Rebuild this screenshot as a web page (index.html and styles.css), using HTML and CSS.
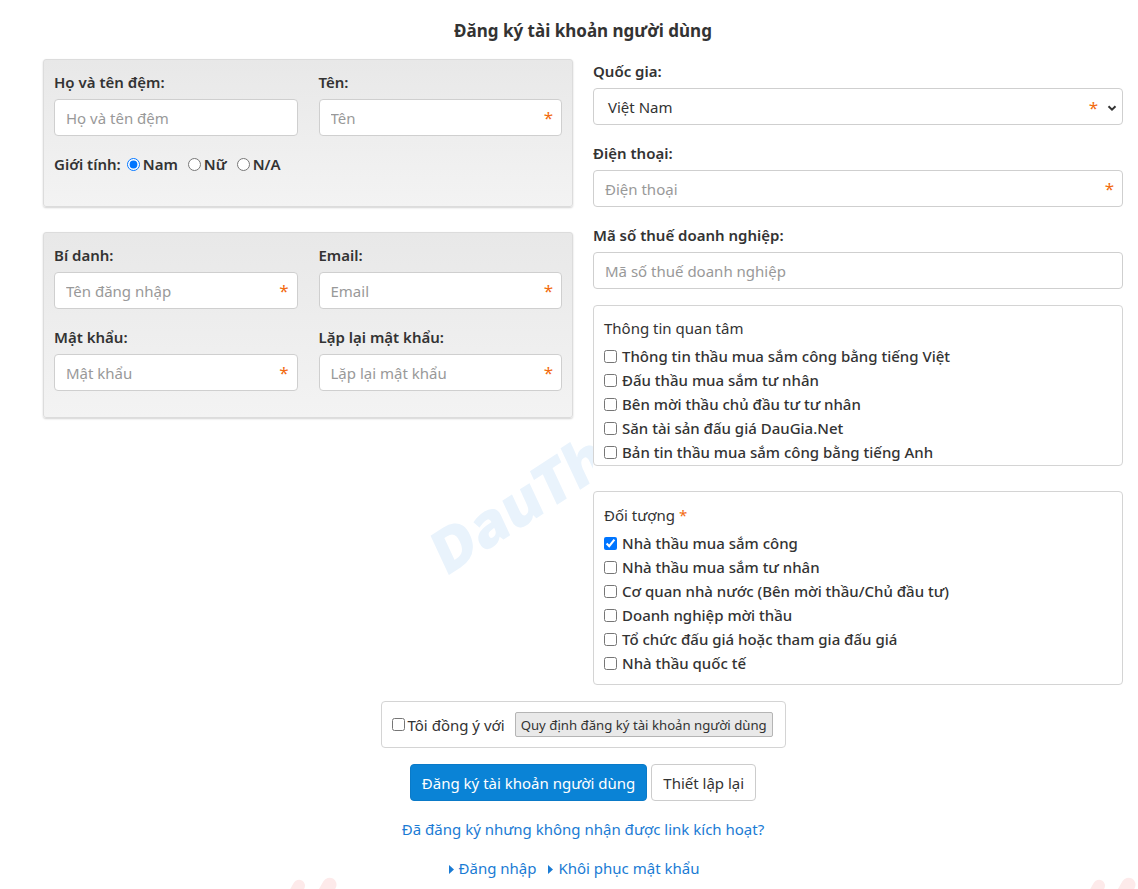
FILE: index.html
```html
<!DOCTYPE html>
<html lang="vi">
<head>
<meta charset="utf-8">
<title>Đăng ký tài khoản người dùng</title>
<link rel="stylesheet" href="styles.css">
</head>
<body>
<div class="viewport">
  <div class="wm-clip" aria-hidden="true"><div class="wm-blue">DauThau</div></div>
  <span class="blob blob-1" aria-hidden="true"></span>
  <span class="blob blob-2" aria-hidden="true"></span>
  <span class="blob blob-3" aria-hidden="true"></span>
  <span class="blob blob-4" aria-hidden="true"></span>
  <div class="page">
    <h1 class="title">Đăng ký tài khoản người dùng</h1>
    <div class="cols">
      <div class="col">
        <div class="panel panel-name">
          <div class="grid2">
            <div class="group">
              <label class="lbl">Họ và tên đệm:</label>
              <div class="field"><input class="input" placeholder="Họ và tên đệm"></div>
            </div>
            <div class="group">
              <label class="lbl">Tên:</label>
              <div class="field"><input class="input" placeholder="Tên"><span class="req">*</span></div>
            </div>
          </div>
          <div class="gender">
            <span class="lbl">Giới tính:</span>
            <label class="opt"><input type="radio" name="g" checked>Nam</label>
            <label class="opt"><input type="radio" name="g">Nữ</label>
            <label class="opt"><input type="radio" name="g">N/A</label>
          </div>
        </div>
        <div class="panel panel-account">
          <div class="grid2">
            <div class="group">
              <label class="lbl">Bí danh:</label>
              <div class="field"><input class="input" placeholder="Tên đăng nhập"><span class="req">*</span></div>
            </div>
            <div class="group">
              <label class="lbl">Email:</label>
              <div class="field"><input class="input" placeholder="Email"><span class="req">*</span></div>
            </div>
            <div class="group">
              <label class="lbl">Mật khẩu:</label>
              <div class="field"><input class="input" placeholder="Mật khẩu"><span class="req">*</span></div>
            </div>
            <div class="group">
              <label class="lbl">Lặp lại mật khẩu:</label>
              <div class="field"><input class="input" placeholder="Lặp lại mật khẩu"><span class="req">*</span></div>
            </div>
          </div>
        </div>
      </div>
      <div class="col col-right">
        <div class="group rgroup">
          <label class="lbl">Quốc gia:</label>
          <div class="field">
            <div class="select">Việt Nam
              <span class="req req-select">*</span>
              <svg class="chev" width="10" height="8" viewBox="0 0 10 8"><path d="M1.5 2.2 L5 5.6 L8.5 2.2" fill="none" stroke="#333" stroke-width="2"/></svg>
            </div>
          </div>
        </div>
        <div class="group rgroup">
          <label class="lbl">Điện thoại:</label>
          <div class="field"><input class="input" placeholder="Điện thoại"><span class="req">*</span></div>
        </div>
        <div class="group rgroup rgroup-last">
          <label class="lbl">Mã số thuế doanh nghiệp:</label>
          <div class="field"><input class="input" placeholder="Mã số thuế doanh nghiệp"></div>
        </div>
        <div class="box box-interest">
          <div class="legend">Thông tin quan tâm</div>
          <label class="check"><input type="checkbox">Thông tin thầu mua sắm công bằng tiếng Việt</label>
          <label class="check"><input type="checkbox">Đấu thầu mua sắm tư nhân</label>
          <label class="check"><input type="checkbox">Bên mời thầu chủ đầu tư tư nhân</label>
          <label class="check"><input type="checkbox">Săn tài sản đấu giá DauGia.Net</label>
          <label class="check"><input type="checkbox">Bản tin thầu mua sắm công bằng tiếng Anh</label>
        </div>
        <div class="box box-target">
          <div class="legend">Đối tượng <span class="req-inline">*</span></div>
          <label class="check"><input type="checkbox" checked>Nhà thầu mua sắm công</label>
          <label class="check"><input type="checkbox">Nhà thầu mua sắm tư nhân</label>
          <label class="check"><input type="checkbox">Cơ quan nhà nước (Bên mời thầu/Chủ đầu tư)</label>
          <label class="check"><input type="checkbox">Doanh nghiệp mời thầu</label>
          <label class="check"><input type="checkbox">Tổ chức đấu giá hoặc tham gia đấu giá</label>
          <label class="check"><input type="checkbox">Nhà thầu quốc tế</label>
        </div>
      </div>
    </div>
    <div class="agree-row">
      <div class="agree">
        <label class="agree-label"><input type="checkbox">Tôi đồng ý với</label>
        <button class="rule-btn" type="button">Quy định đăng ký tài khoản người dùng</button>
      </div>
    </div>
    <div class="actions">
      <button class="btn btn-primary" type="button">Đăng ký tài khoản người dùng</button>
      <button class="btn btn-default" type="button">Thiết lập lại</button>
    </div>
    <p class="resend"><a href="#">Đã đăng ký nhưng không nhận được link kích hoạt?</a></p>
    <p class="links">
      <a href="#"><svg class="tri" width="5" height="9" viewBox="0 0 5 9"><path d="M0 0 L5 4.5 L0 9 Z" fill="#1a7bd4"/></svg>Đăng nhập</a>
      <a href="#"><svg class="tri" width="5" height="9" viewBox="0 0 5 9"><path d="M0 0 L5 4.5 L0 9 Z" fill="#1a7bd4"/></svg>Khôi phục mật khẩu</a>
    </p>
  </div>
</div>
</body>
</html>
```

FILE: styles.css
```css
html, body {
  margin: 0;
  padding: 0;
  background: #fff;
}
body {
  font-family: "Noto Sans", "Open Sans", "DejaVu Sans", sans-serif;
  font-size: 15px;
  color: #333;
}
.viewport {
  position: relative;
  height: 889px;
  overflow: hidden;
}
.wm-clip {
  position: absolute;
  left: 0;
  top: 0;
  width: 593px;
  height: 889px;
  overflow: hidden;
  z-index: 0;
  pointer-events: none;
}
.wm-blue {
  position: absolute;
  left: 448px;
  top: 524px;
  font-family: "Open Sans", "Noto Sans", sans-serif;
  font-weight: 800;
  font-size: 60px;
  line-height: 60px;
  color: #e9f3fc;
  white-space: nowrap;
  transform: rotate(-33deg) skewX(-8deg);
  transform-origin: left bottom;
}
.blob {
  position: absolute;
  z-index: 0;
  width: 12px;
  height: 24px;
  border-radius: 6px 6px 3px 3px;
  background: #fdeaea;
  transform: rotate(30deg);
  pointer-events: none;
}
.blob-1 { left: 290px; top: 879px; }
.blob-2 { left: 320px; top: 877px; width: 14px; border-radius: 7px 7px 3px 3px; }
.blob-3 { left: 1090px; top: 879px; }
.blob-4 { left: 1119px; top: 877px; width: 14px; border-radius: 7px 7px 3px 3px; }

.page {
  position: relative;
  z-index: 1;
  width: 1080px;
  margin-left: 43px;
  padding-top: 19px;
}
.title {
  margin: 0 0 16px;
  text-align: center;
  font-size: 17px;
  line-height: 24px;
  font-weight: 700;
  color: #333;
}
.cols {
  display: grid;
  grid-template-columns: 530px 530px;
  column-gap: 20px;
  align-items: start;
}
.panel {
  background: linear-gradient(#e8e8e8, #f3f3f3);
  border: 1px solid #dcdcdc;
  border-radius: 3px;
  box-shadow: 0 1px 2px rgba(0,0,0,0.18);
}
.panel-name {
  padding: 11px 10px 31px;
  margin-bottom: 25px;
}
.panel-account {
  padding: 11px 10px 26px;
}
.grid2 {
  display: grid;
  grid-template-columns: 1fr 1fr;
  column-gap: 21px;
  row-gap: 17px;
}
.group {
  display: flex;
  flex-direction: column;
  gap: 6px;
}
.lbl {
  font-weight: 600;
  line-height: 22px;
  color: #333;
}
.field {
  position: relative;
}
.input, .select {
  display: block;
  box-sizing: border-box;
  width: 100%;
  height: 37px;
  border: 1px solid #cfcfcf;
  border-radius: 4px;
  background: #fff;
  padding: 0 11px;
  font-family: inherit;
  font-size: 15px;
  color: #333;
  outline: none;
}
.input::placeholder {
  color: #999;
}
.select {
  display: flex;
  align-items: center;
  padding-left: 14px;
  position: relative;
}
.req {
  position: absolute;
  right: 9px;
  top: 9px;
  color: #f26b0f;
  font-size: 17px;
  line-height: 20px;
}
.req-select {
  right: 24px;
}
.chev {
  position: absolute;
  right: 5px;
  top: 15px;
}
.req-inline {
  color: #f26b0f;
}
.gender {
  display: flex;
  align-items: center;
  margin-top: 17px;
  line-height: 22px;
}
.gender .lbl {
  margin-right: 6px;
}
.opt {
  display: inline-flex;
  align-items: center;
  font-weight: 600;
  margin-right: 10px;
}
.opt input {
  margin: 0 3px 0 0;
  width: 13px;
  height: 13px;
}

.col-right {
  padding-top: 1px;
}
.rgroup {
  margin-bottom: 17px;
}
.rgroup-last {
  margin-bottom: 16px;
}
.box {
  position: relative;
  background: #fff;
  border: 1px solid #d4d4d4;
  border-radius: 4px;
  padding: 11px 10px 1px;
}
.box-target {
  margin-top: 25px;
  padding: 12px 10px 9px;
}
.legend {
  line-height: 22px;
  margin-bottom: 5px;
  color: #333;
}
.check {
  display: flex;
  align-items: center;
  line-height: 24px;
  font-weight: 500;
}
.check input {
  margin: 0 5px 0 0;
  width: 13px;
  height: 13px;
}

.agree-row {
  display: flex;
  justify-content: center;
  margin-top: 16px;
}
.agree {
  box-sizing: border-box;
  width: 405px;
  height: 47px;
  display: flex;
  align-items: center;
  padding: 0 10px;
  border: 1px solid #d4d4d4;
  border-radius: 4px;
  background: #fff;
}
.agree-label {
  display: inline-flex;
  align-items: center;
  flex-shrink: 0;
  white-space: nowrap;
  margin-right: 10px;
}
.agree-label input {
  margin: 0 3px 0 0;
  width: 13px;
  height: 13px;
}
.rule-btn {
  flex-shrink: 0;
  height: 25px;
  padding: 0 5px;
  border: 1px solid #b5b5b5;
  border-radius: 2px;
  background: #e9e9e9;
  font-family: inherit;
  font-size: 13.2px;
  color: #333;
  white-space: nowrap;
}
.actions {
  display: flex;
  justify-content: center;
  gap: 4px;
  margin-top: 16px;
}
.btn {
  height: 37px;
  padding: 0 11px;
  border-radius: 4px;
  font-family: inherit;
  font-size: 15px;
}
.btn-primary {
  background: #0a83d6;
  border: 1px solid #0a7ac8;
  color: #fff;
}
.btn-default {
  background: #fff;
  border: 1px solid #ccc;
  color: #333;
}
.resend {
  margin: 17px 0 0;
  text-align: center;
  line-height: 22px;
}
a {
  color: #1a7bd4;
  text-decoration: none;
}
.links {
  margin: 17px 0 0;
  padding-right: 18px;
  text-align: center;
  line-height: 22px;
}
.links a {
  margin: 0 4px;
}
.tri {
  margin-right: 5px;
  vertical-align: 0;
}
```
